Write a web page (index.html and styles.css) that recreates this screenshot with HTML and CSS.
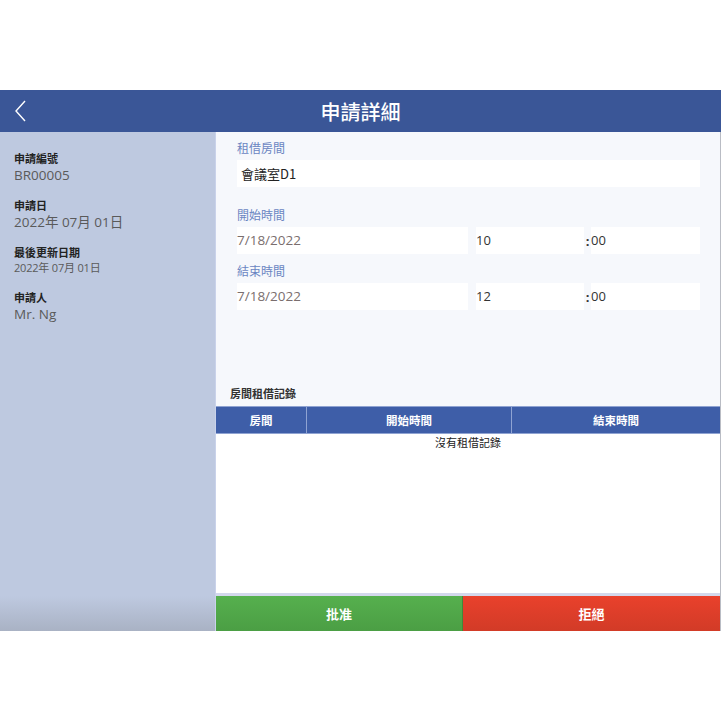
FILE: index.html
```html
<!DOCTYPE html>
<html lang="zh-Hant">
<head>
    <meta charset="UTF-8">
    <meta name="viewport" content="width=device-width, initial-scale=1.0">
    <title>申請詳細</title>
    <link rel="stylesheet" href="styles.css">
</head>
<body>
    <div class="app">
        <header class="topbar">
            <button class="back" aria-label="返回">
                <svg width="14" height="22" viewBox="0 0 14 22">
                    <path d="M11 1 L2 11 L11 21" fill="none" stroke="#fff" stroke-width="1.4"/>
                </svg>
            </button>
            <h1>申請詳細</h1>
        </header>

        <div class="main">
            <aside class="sidebar">
                <div class="info">
                    <div class="info-label">申請編號</div>
                    <div class="info-value">BR00005</div>
                </div>
                <div class="info">
                    <div class="info-label">申請日</div>
                    <div class="info-value">2022年 07月 01日</div>
                </div>
                <div class="info">
                    <div class="info-label">最後更新日期</div>
                    <div class="info-value small">2022年 07月 01日</div>
                </div>
                <div class="info">
                    <div class="info-label">申請人</div>
                    <div class="info-value">Mr. Ng</div>
                </div>
            </aside>

            <section class="content">
                <div class="form">
                    <div class="field-label">租借房間</div>
                    <div class="box room">會議室D1</div>

                    <div class="field-label start">開始時間</div>
                    <div class="time-row">
                        <div class="box date">7/18/2022</div>
                        <div class="box hour">10</div>
                        <span class="colon">:</span>
                        <div class="box minute">00</div>
                    </div>

                    <div class="field-label end">結束時間</div>
                    <div class="time-row">
                        <div class="box date">7/18/2022</div>
                        <div class="box hour">12</div>
                        <span class="colon">:</span>
                        <div class="box minute">00</div>
                    </div>
                </div>

                <div class="records-title">房間租借記錄</div>
                <div class="records">
                    <div class="records-head">
                        <div class="col col-room">房間</div>
                        <div class="col col-start">開始時間</div>
                        <div class="col col-end">結束時間</div>
                    </div>
                    <div class="records-body">
                        <div class="empty">沒有租借記錄</div>
                    </div>
                </div>

                <div class="actions">
                    <button class="btn approve">批准</button>
                    <button class="btn reject">拒絕</button>
                </div>
            </section>
        </div>
    </div>
</body>
</html>
```

FILE: styles.css
```css
body {
    margin: 0;
    background-color: #fff;
    font-family: "Open Sans", "Noto Sans CJK TC", sans-serif;
}
.app {
    margin-top: 90px;
    height: 541px;
    display: flex;
    flex-direction: column;
}
.topbar {
    height: 42px;
    background-color: #3a5697;
    display: flex;
    align-items: center;
    justify-content: center;
    position: relative;
}
.topbar h1 {
    margin: 0;
    color: #fff;
    font-size: 20px;
    font-weight: 500;
    font-family: "Noto Sans CJK TC", sans-serif;
}
.back {
    position: absolute;
    left: 12px;
    top: 10px;
    background: none;
    border: none;
    padding: 0;
    width: 18px;
    height: 22px;
    cursor: pointer;
}
.main {
    flex: 1;
    display: flex;
    min-height: 0;
}
.sidebar {
    width: 216px;
    border-right: 1px solid #c9d2ea;
    background: linear-gradient(to bottom, #bec9e0 0%, #bec9e0 93%, #a9b2c4 100%);
    padding: 18px 14px 0;
    box-sizing: border-box;
}
.info {
    margin-bottom: 13px;
}
.info-label {
    font-family: "Noto Sans CJK TC", sans-serif;
    font-weight: 700;
    font-size: 11px;
    line-height: 16px;
    color: #222;
}
.info-value {
    font-size: 13.5px;
    line-height: 18px;
    color: #5a5a5a;
}
.info-value.small {
    font-size: 11px;
    line-height: 16px;
    letter-spacing: -0.2px;
}
.content {
    flex: 1;
    display: flex;
    flex-direction: column;
    background-color: #f6f8fc;
    border-right: 1px solid #b9bcc4;
}
.form {
    padding: 7px 20px 0 21px;
}
.field-label {
    font-family: "Noto Sans CJK TC", sans-serif;
    font-size: 12px;
    line-height: 18px;
    color: #6b86c2;
    margin-bottom: 3px;
}
.field-label.start {
    margin-top: 19px;
}
.field-label.end {
    margin-top: 8px;
}
.box {
    height: 27px;
    line-height: 27px;
    background-color: #fff;
    font-size: 13px;
    color: #333;
    box-sizing: border-box;
}
.room {
    padding-left: 4px;
    font-family: "Noto Sans CJK TC", sans-serif;
    color: #222;
}
.time-row {
    display: flex;
    align-items: center;
}
.date {
    width: 231px;
    color: #7a6e6e;
    font-size: 13.5px;
}
.hour {
    width: 108px;
    margin-left: 8px;
}
.colon {
    width: 7px;
    font-size: 13px;
    font-weight: 700;
    color: #333;
    text-align: center;
}
.minute {
    flex: 1;
}
.records-title {
    margin-top: 75px;
    padding-left: 14px;
    font-family: "Noto Sans CJK TC", sans-serif;
    font-weight: 700;
    font-size: 11px;
    line-height: 16px;
    color: #333;
    height: 21px;
}
.records {
    flex: 1;
    display: flex;
    flex-direction: column;
    min-height: 0;
}
.records-head {
    display: flex;
    height: 28px;
    background-color: #3e5ea8;
    border-top: 1px solid #8fa3d2;
    border-bottom: 1px solid #8fa3d2;
    box-sizing: border-box;
}
.col {
    display: flex;
    align-items: center;
    justify-content: center;
    color: #fff;
    font-family: "Noto Sans CJK TC", sans-serif;
    font-weight: 700;
    font-size: 11.5px;
}
.col-room {
    width: 90px;
    border-right: 1px solid #8fa3d2;
}
.col-start {
    width: 204px;
    border-right: 1px solid #8fa3d2;
}
.col-end {
    flex: 1;
}
.records-body {
    flex: 1;
    background-color: #fff;
    border-bottom: 3px solid #d3d8ec;
}
.empty {
    text-align: center;
    font-family: "Noto Sans CJK TC", sans-serif;
    font-size: 11px;
    line-height: 16px;
    color: #222;
}
.actions {
    display: flex;
    height: 35px;
}
.btn {
    border: none;
    color: #fff;
    font-family: "Noto Sans CJK TC", sans-serif;
    font-weight: 700;
    font-size: 13px;
    cursor: pointer;
}
.approve {
    width: 247px;
    background: linear-gradient(to bottom, #56b04e, #4b9e44);
    border-right: 1px solid #3f8a3a;
}
.reject {
    flex: 1;
    background: linear-gradient(to bottom, #e9412c, #d23b27);
}
```
